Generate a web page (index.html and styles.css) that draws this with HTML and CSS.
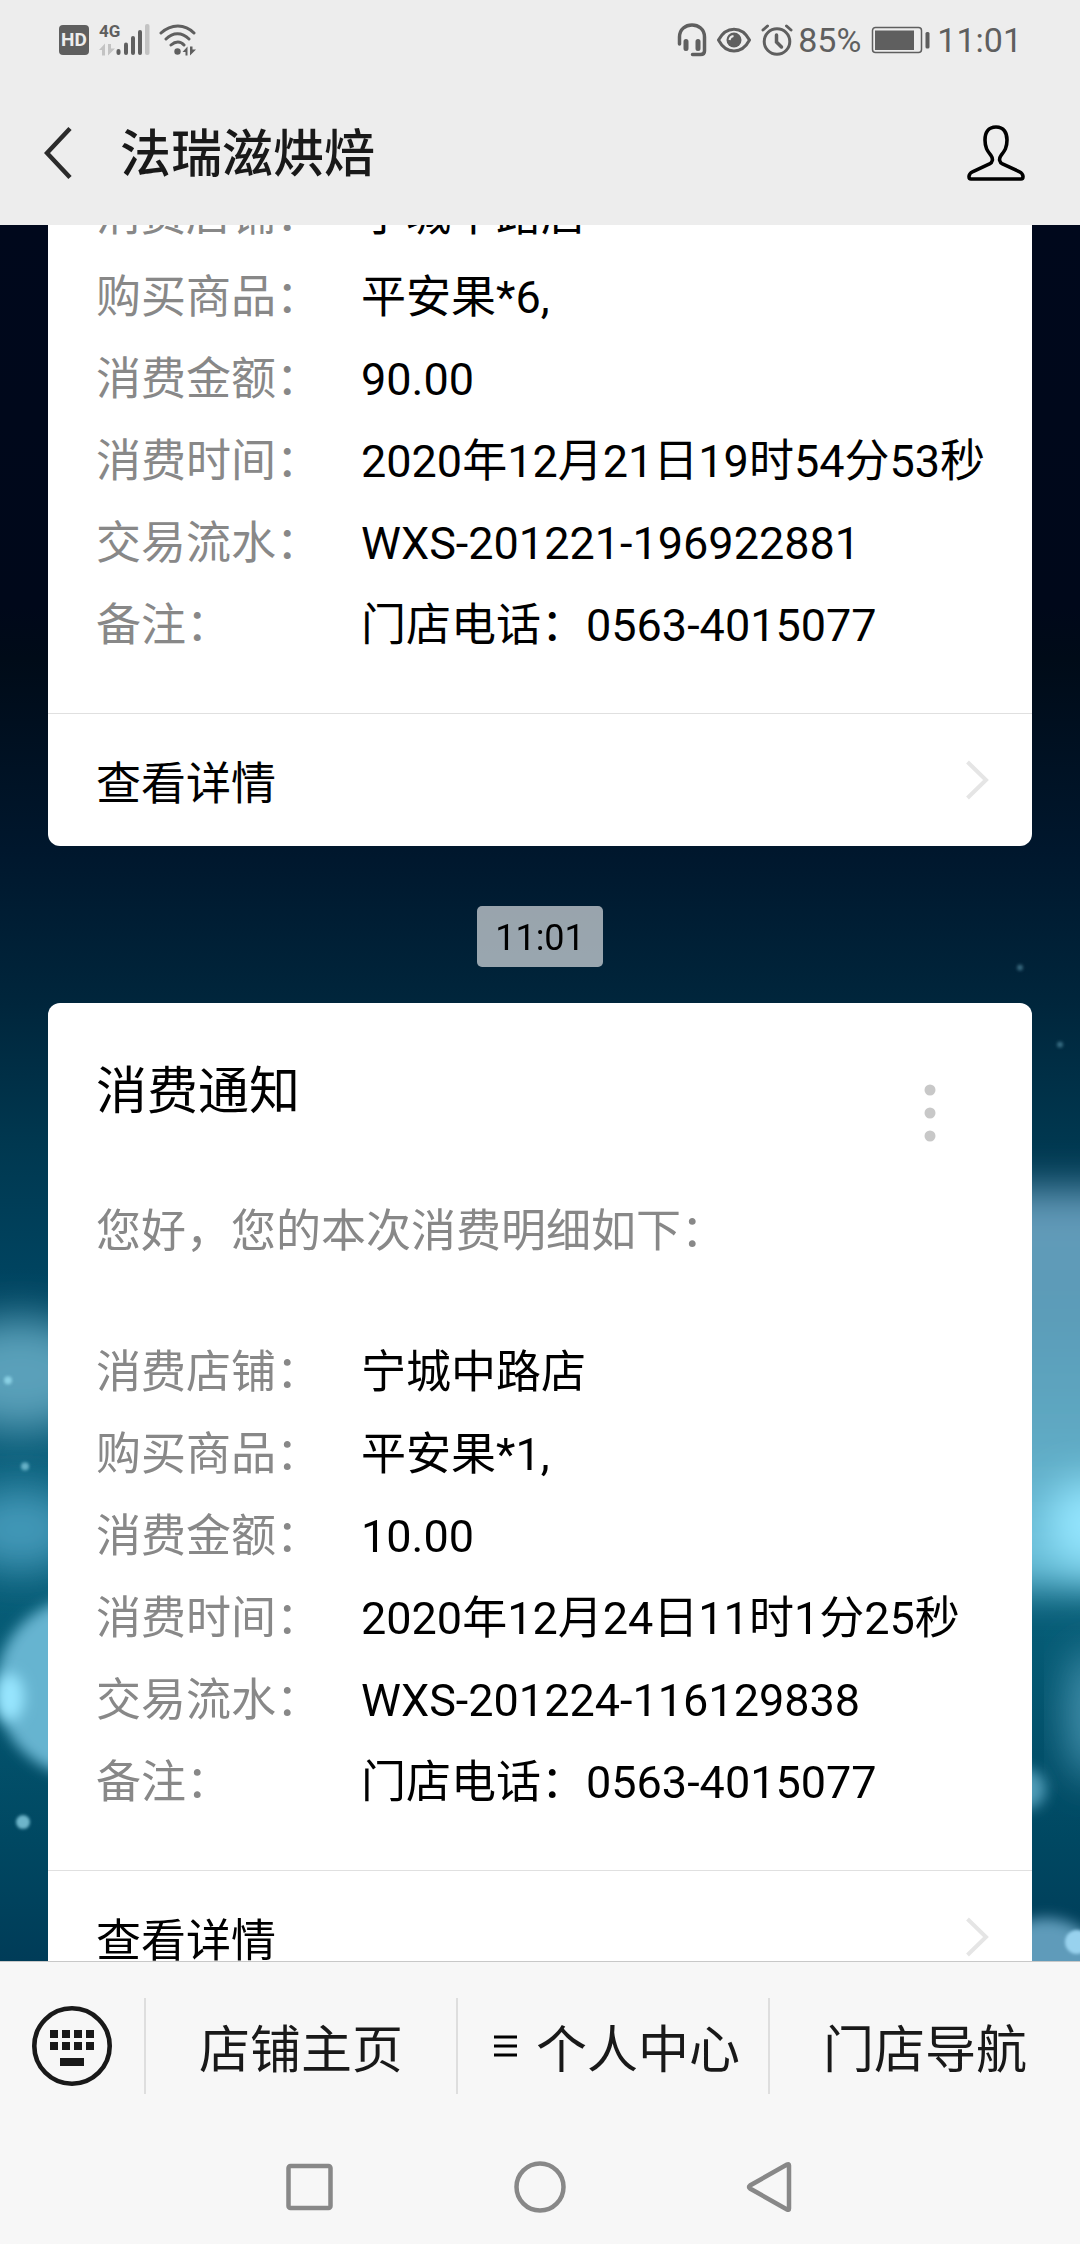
FILE: index.html
```
<!DOCTYPE html>
<html lang="zh-CN">
  <head>
    <meta charset="UTF-8" />
    <meta name="viewport" content="width=device-width, initial-scale=1.0" />
    <title>法瑞滋烘焙</title>
    <link rel="stylesheet" href="styles.css">
  </head>
  <body>
    <!-- Status bar -->
    <div class="status-bar">
      <div class="status-left">
        <span class="hd-badge">HD</span>
        <div class="signal">
          <span class="network">4G</span>
          <svg width="52" height="34" viewBox="0 0 52 34">
            <g fill="#c3c3c3">
              <path d="M0 27l6-6.500v12h-3v-5.500zM9 21v11.500l7-7h-4v-4.500z" />
              <rect x="46" y="1" width="4.500" height="31" rx="2" />
            </g>
            <g fill="#5f5f5f">
              <rect x="17.500" y="26" width="4" height="6" rx="2" />
              <rect x="25" y="19.500" width="4" height="12.500" rx="2" />
              <rect x="32" y="13" width="4" height="19" rx="2" />
              <rect x="39" y="7" width="4" height="25" rx="2" />
            </g>
          </svg>
        </div>
        <svg width="38" height="34" viewBox="0 0 38 34" fill="none" stroke="#5f5f5f" stroke-width="3" stroke-linecap="round">
          <path d="M2 10c10-9.500 24-9.500 33 0M7 16c7-7 16-7 23 0M12 22c4.500-4 9.500-4 13 0" />
          <circle cx="18.500" cy="28.500" r="3.200" fill="#5f5f5f" stroke="none" />
          <path d="M23.500 29l5-5.500v9h-2v-3.500zM31 23.500v9l6-6h-3.500v-3z" fill="#5f5f5f" stroke="none" />
        </svg>
      </div>
      <div class="status-right">
        <svg width="30" height="34" viewBox="0 0 30 34" fill="none" stroke="#5f5f5f" stroke-width="3.500" stroke-linecap="round">
          <path d="M2.500 21v-7c0-16 25-16 25 0v14q0 3.500-4 3.500h-8" />
          <path d="M9 18.500v7M21 18.500v7" stroke-width="5" />
        </svg>
        <svg width="34" height="34" viewBox="0 0 34 34">
          <path d="M1.500 17c7.500-14.500 23.500-14.500 31 0c-7.500 14.500-23.500 14.500-31 0z" fill="none" stroke="#5f5f5f" stroke-width="3" />
          <circle cx="17" cy="17" r="7.500" fill="#5f5f5f" />
          <path d="M12.500 17q.5-3.500 4-4" fill="none" stroke="#ededed" stroke-width="2" />
        </svg>
        <svg class="alarm" width="32" height="34" viewBox="0 0 32 34" fill="none" stroke="#5f5f5f" stroke-width="3" stroke-linecap="round">
          <circle cx="16" cy="18.500" r="12.800" />
          <path d="M2 7l4.500-4M30 7l-4.500-4" />
          <path d="M15.500 12v7l5 5" stroke-width="3.500" />
        </svg>
        <span class="battery-level">85%</span>
        <svg width="60" height="34" viewBox="0 0 60 34">
          <rect x="1.500" y="4.500" width="49" height="25" rx="3" fill="none" stroke="#5f5f5f" stroke-width="1.500" />
          <rect x="4" y="7.500" width="39" height="19.500" fill="#5f5f5f" />
          <rect x="54.500" y="9" width="4" height="16.500" rx="1.500" fill="#5f5f5f" />
        </svg>
        <span class="clock">11:01</span>
      </div>
    </div>

    <!-- Title bar -->
    <header class="title-bar">
      <button type="button" class="back" aria-label="返回">
        <svg width="28" height="54" viewBox="0 0 28 54" fill="none" stroke="#2b2b2b" stroke-width="4.500">
          <path d="M26 2.500L3 27l23 24.500" />
        </svg>
      </button>
      <h1>法瑞滋烘焙</h1>
      <button type="button" class="profile" aria-label="公众号资料">
        <svg width="58" height="56" viewBox="0 0 58 56" fill="none" stroke="#000" stroke-width="3.600">
          <path d="M29 2C21 2 18 8 18 15c0 8 2.500 11 6 15.500c2.500 3.500 1.500 7-1.500 8.500L6 46.500c-3 1.500-4 3-4 5q0 2.500 2 2.500h50q2 0 2-2.500c0-2-1-3.500-4-5L35.500 39c-3-1.500-4-5-1.500-8.500C37.500 26 40 23 40 15C40 8 37 2 29 2z" />
        </svg>
      </button>
    </header>

    <!-- Message list -->
    <main class="chat">
      <svg class="wallpaper" viewBox="0 0 1080 1737" preserveAspectRatio="none" aria-hidden="true">
        <defs>
          <linearGradient id="sea" x1="0" y1="0" x2="0" y2="1">
            <stop offset="0" stop-color="#00081c" />
            <stop offset=".22" stop-color="#00081a" />
            <stop offset=".25" stop-color="#000b18" />
            <stop offset=".36" stop-color="#00172d" />
            <stop offset=".45" stop-color="#00263c" />
            <stop offset=".53" stop-color="#003850" />
            <stop offset=".6" stop-color="#00435f" />
            <stop offset=".72" stop-color="#0b607c" />
            <stop offset=".82" stop-color="#055a74" />
            <stop offset=".93" stop-color="#004862" />
            <stop offset="1" stop-color="#003c58" />
          </linearGradient>
          <linearGradient id="glow" x1="0" y1="0" x2="0" y2="1">
            <stop offset="0" stop-color="#6499b8" />
            <stop offset=".3" stop-color="#5b9cb8" />
            <stop offset=".6" stop-color="#5ea8c2" />
            <stop offset="1" stop-color="#6cc4de" />
          </linearGradient>
          <filter id="soft" x="-50%" y="-50%" width="200%" height="200%"><feGaussianBlur stdDeviation="20" /></filter>
          <filter id="mid" x="-50%" y="-50%" width="200%" height="200%"><feGaussianBlur stdDeviation="7" /></filter>
          <filter id="fine" x="-50%" y="-50%" width="200%" height="200%"><feGaussianBlur stdDeviation="1.500" /></filter>
        </defs>
        <rect width="1080" height="1737" fill="url(#sea)" />
        <!-- left side lights -->
        <ellipse cx="20" cy="1150" rx="80" ry="56" fill="#5aa0ba" filter="url(#soft)" />
        <ellipse cx="20" cy="1305" rx="60" ry="42" fill="#4398b8" filter="url(#soft)" />
        <circle cx="86" cy="1463" r="90" fill="#66b4d0" filter="url(#mid)" />
        <ellipse cx="10" cy="1473" rx="14" ry="24" fill="#98e6ff" filter="url(#mid)" />
        <!-- right side lights -->
        <rect x="960" y="965" width="240" height="400" fill="url(#glow)" filter="url(#soft)" />
        <ellipse cx="1090" cy="1300" rx="44" ry="44" fill="#94e6ff" filter="url(#soft)" />
        <ellipse cx="1092" cy="1490" rx="24" ry="66" fill="#4a96b2" filter="url(#soft)" />
        <circle cx="1026" cy="1565" r="20" fill="#4f9cb8" filter="url(#mid)" />
        <circle cx="1046" cy="1756" r="62" fill="#5f9bba" filter="url(#mid)" />
        <circle cx="1077" cy="1718" r="12" fill="#98d2ee" filter="url(#fine)" />
        <!-- sparks -->
        <g fill="#8ad0e4" filter="url(#fine)">
          <circle cx="8" cy="1156" r="4" />
          <circle cx="25" cy="1242" r="4" opacity=".7" />
          <circle cx="23" cy="1598" r="7" opacity=".8" />
          <circle cx="1020" cy="743" r="3" opacity=".4" />
          <circle cx="1060" cy="820" r="3" opacity=".4" />
        </g>
      </svg>

      <div class="messages">
        <article class="card">
          <dl class="details">
            <dt>消费店铺：</dt><dd>宁城中路店</dd>
            <dt>购买商品：</dt><dd>平安果*6,</dd>
            <dt>消费金额：</dt><dd>90.00</dd>
            <dt>消费时间：</dt><dd>2020年12月21日19时54分53秒</dd>
            <dt>交易流水：</dt><dd>WXS-201221-196922881</dd>
            <dt>备注：</dt><dd>门店电话：0563-4015077</dd>
          </dl>
          <a href="#" class="more">
            查看详情
            <svg width="24" height="40" viewBox="0 0 24 40" fill="none" stroke="#e5e5e5" stroke-width="4">
              <path d="M2.500 2L21 20L2.500 38" />
            </svg>
          </a>
        </article>

        <time class="stamp">11:01</time>

        <article class="card">
          <div class="card-head">
            <h2>消费通知</h2>
            <button type="button" class="dots" aria-label="更多">
              <svg width="12" height="60" viewBox="0 0 12 60" fill="#c8c8c8">
                <circle cx="6" cy="7" r="5.500" />
                <circle cx="6" cy="30" r="5.500" />
                <circle cx="6" cy="53" r="5.500" />
              </svg>
            </button>
          </div>
          <p class="greeting">您好，您的本次消费明细如下：</p>
          <dl class="details">
            <dt>消费店铺：</dt><dd>宁城中路店</dd>
            <dt>购买商品：</dt><dd>平安果*1,</dd>
            <dt>消费金额：</dt><dd>10.00</dd>
            <dt>消费时间：</dt><dd>2020年12月24日11时1分25秒</dd>
            <dt>交易流水：</dt><dd>WXS-201224-116129838</dd>
            <dt>备注：</dt><dd>门店电话：0563-4015077</dd>
          </dl>
          <a href="#" class="more">
            查看详情
            <svg width="24" height="40" viewBox="0 0 24 40" fill="none" stroke="#e5e5e5" stroke-width="4">
              <path d="M2.500 2L21 20L2.500 38" />
            </svg>
          </a>
        </article>
      </div>
    </main>

    <!-- Account menu -->
    <nav class="menu">
      <button type="button" class="keyboard" aria-label="键盘">
        <svg width="80" height="80" viewBox="0 0 80 80" fill="#191919">
          <circle cx="40" cy="40" r="37.700" fill="none" stroke="#191919" stroke-width="4.600" />
          <path d="M18 24h8v8h-8zM30 24h8v8h-8zM42 24h8v8h-8zM54 24h8v8h-8zM18 36h8v8h-8zM30 36h8v8h-8zM42 36h8v8h-8zM54 36h8v8h-8zM28 52h24v8h-24z" />
        </svg>
      </button>
      <button type="button" class="menu-item">店铺主页</button>
      <button type="button" class="menu-item">
        <svg class="submenu" width="24" height="24" viewBox="0 0 24 24" stroke="#000" stroke-width="3">
          <path d="M0 3h23M0 12h23M0 21h23" />
        </svg>
        个人中心
      </button>
      <button type="button" class="menu-item">门店导航</button>
    </nav>

    <!-- System navigation -->
    <nav class="system-nav">
      <button type="button" aria-label="最近任务">
        <svg width="60" height="60" viewBox="0 0 60 60"><rect x="8.500" y="9" width="42" height="42" rx="2" /></svg>
      </button>
      <button type="button" aria-label="主屏幕">
        <svg width="60" height="60" viewBox="0 0 60 60"><circle cx="30" cy="30" r="23.500" /></svg>
      </button>
      <button type="button" aria-label="返回上一级">
        <svg width="60" height="60" viewBox="0 0 60 60"><path d="M47 7.500q2-1 2 1v43q0 2-2 1L10 31.500q-2-1.500 0-3z" /></svg>
      </button>
    </nav>
  </body>
</html>
```
FILE: styles.css
```
* {
  margin: 0;
  padding: 0;
  box-sizing: border-box;
}
body {
  display: flex;
  flex-direction: column;
  height: 100vh;
  background-color: #ededed;
  color: #000;
  font-family: Roboto, "Noto Sans CJK SC", sans-serif;
}
button {
  display: flex;
  align-items: center;
  justify-content: center;
  border: none;
  background: none;
  color: inherit;
  font-family: inherit;
  cursor: pointer;
}
svg {
  display: block;
  flex-shrink: 0;
}

/* Status bar */
.status-bar {
  display: flex;
  justify-content: space-between;
  align-items: center;
  height: 80px;
  padding: 0 58px 0 59px;
  color: #5f5f5f;
  font-size: 34px;
}
.status-left,
.status-right {
  display: flex;
  align-items: center;
}
.status-left {
  gap: 8px;
}
.status-right {
  gap: 10px;
}
.hd-badge {
  width: 30px;
  border-radius: 4px;
  background-color: #5f5f5f;
  color: #ededed;
  font-size: 19px;
  font-weight: 700;
  line-height: 30px;
  text-align: center;
}
.signal {
  position: relative;
  margin-left: 2px;
}
.network {
  position: absolute;
  top: 0;
  left: 0;
  font-size: 17px;
  font-weight: 700;
  line-height: 17px;
}
.alarm {
  margin-right: -5px;
}
.clock {
  margin-left: -4px;
}

/* Title bar */
.title-bar {
  display: flex;
  align-items: center;
  height: 145px;
  padding: 0 55px 0 44px;
}
.title-bar h1 {
  flex: 1;
  margin-left: 48px;
  padding-bottom: 6px;
  color: #191919;
  font-size: 51px;
  font-weight: 500;
}

/* Message list */
.chat {
  position: relative;
  flex: 1;
  min-height: 0;
  overflow: hidden;
}
.wallpaper {
  position: absolute;
  width: 100%;
  height: 100%;
}
/* scrolled part way through the first card */
.messages {
  position: relative;
  display: flex;
  flex-direction: column;
  margin-top: -51px;
  padding: 0 48px;
}
.card {
  border-radius: 12px;
  background-color: #fff;
}
.card-head {
  display: flex;
  justify-content: space-between;
  align-items: flex-start;
  padding: 52px 96px 0 48px;
}
.card-head h2 {
  font-size: 51px;
  font-weight: 400;
  line-height: 74px;
}
.dots {
  margin-top: 28px;
}
.greeting {
  padding: 48px 48px 58px;
  color: #888;
  font-size: 45px;
  line-height: 82px;
}
.details {
  display: grid;
  grid-template-columns: 265px 1fr;
  padding: 1px 24px 46px 48px;
  font-size: 45px;
  line-height: 82px;
}
.details dt {
  color: #888;
}
.more {
  display: flex;
  justify-content: space-between;
  align-items: center;
  height: 133px;
  padding: 0 43px 0 48px;
  border-top: 1px solid #e0e0e0;
  color: inherit;
  font-size: 45px;
  text-decoration: none;
}
.stamp {
  align-self: center;
  margin: 60px 0 36px;
  padding: 3px 18px 0;
  border-radius: 5px;
  background-color: rgba(255, 255, 255, 0.6);
  font-size: 36px;
  line-height: 58px;
}

/* Account menu */
.menu {
  display: flex;
  align-items: center;
  height: 169px;
  border-top: 1px solid #c8c8c8;
  background-color: #f7f7f7;
  color: #191919;
}
.keyboard {
  width: 144px;
}
.menu-item {
  flex: 1;
  gap: 18px;
  height: 96px;
  border-left: 2px solid #dedede;
  font-size: 51px;
}
.submenu {
  margin-left: 8px;
}

/* System navigation */
.system-nav {
  display: flex;
  justify-content: center;
  align-items: center;
  gap: 170px;
  height: 114px;
  background-color: #f7f7f7;
  fill: none;
  stroke: #888;
  stroke-width: 4.5px;
}
```
